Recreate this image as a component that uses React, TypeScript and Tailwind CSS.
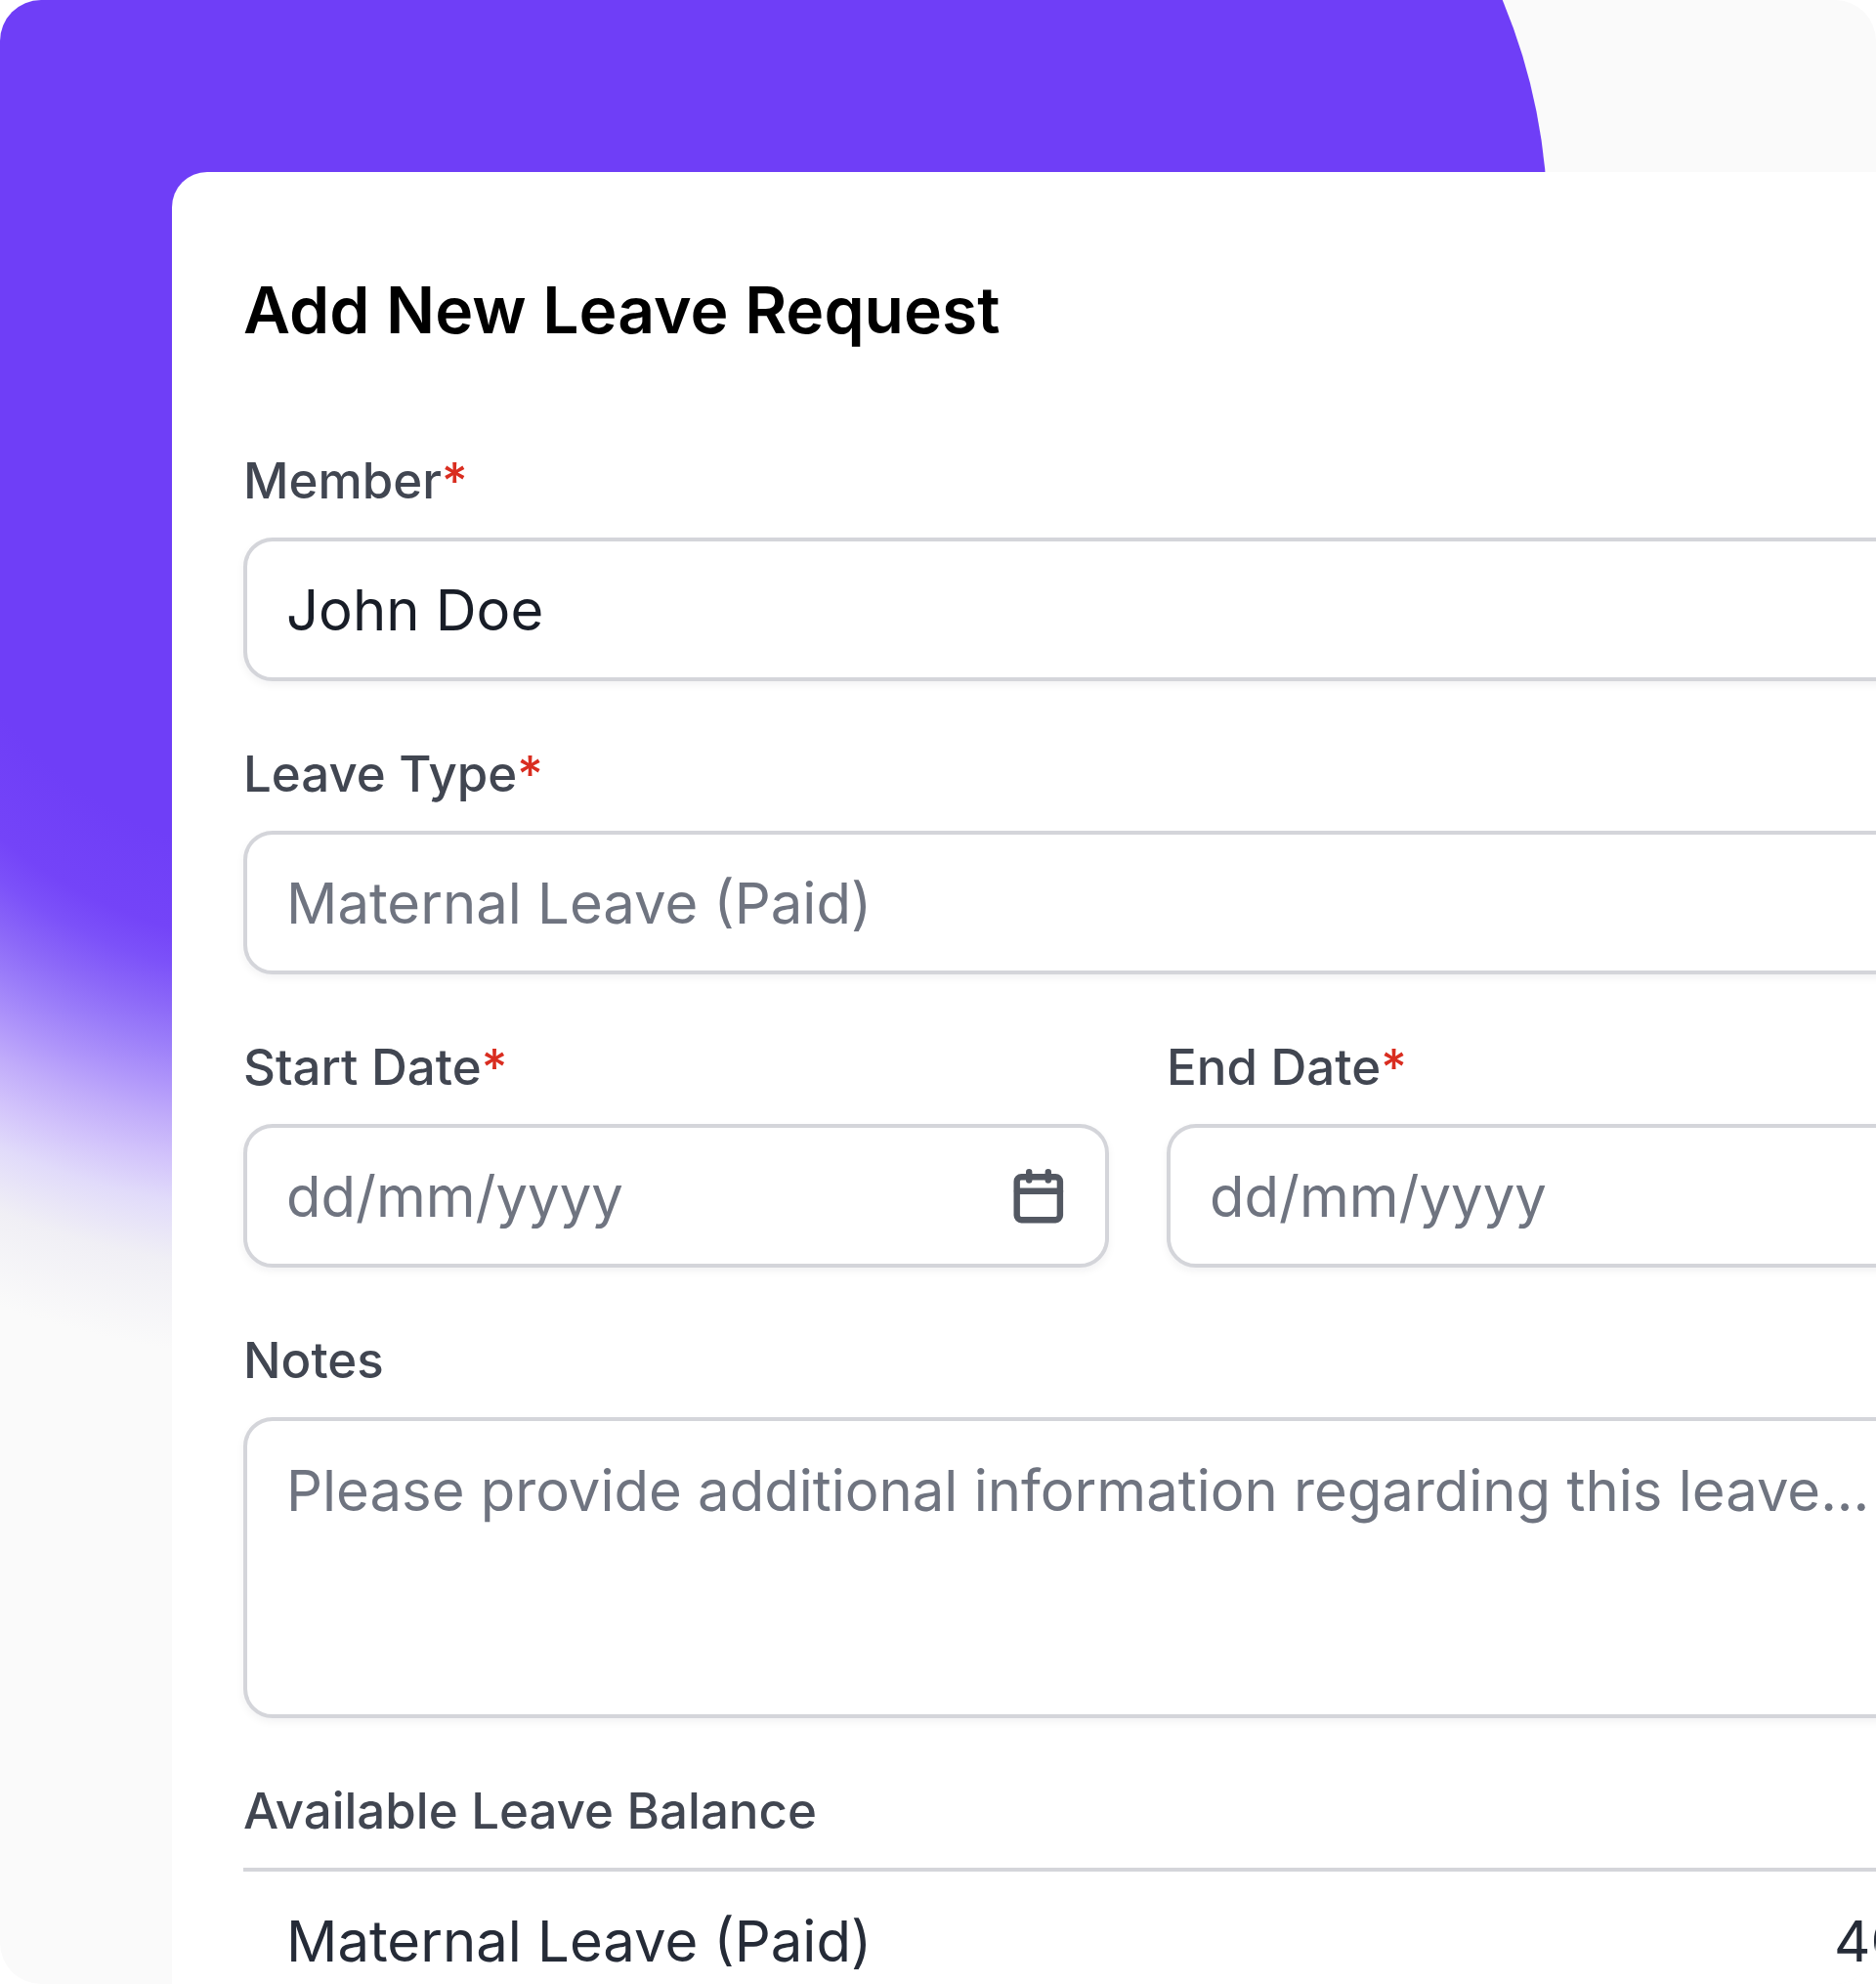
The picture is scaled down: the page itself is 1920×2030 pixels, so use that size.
import React from "react";

const fieldBox =
  "w-full rounded-[30px] border-4 border-[#d4d5da] bg-white shadow-[0_4px_8px_rgba(16,24,40,0.05)]";
const fieldText =
  "px-10 text-[58px] leading-[90px] outline-none placeholder:text-[#6f7480] placeholder:opacity-100";

function Label({ htmlFor, required, children }: { htmlFor: string; required?: boolean; children: React.ReactNode }) {
  return (
    <label htmlFor={htmlFor} className="block text-[51px] font-medium leading-[76px] text-[#414651]">
      {children}
      {required && <span className="text-[#d92d20]">*</span>}
    </label>
  );
}

function CalendarIcon() {
  return (
    <svg width="52" height="60" viewBox="0 0 52 60" fill="none" stroke="currentColor" strokeWidth="6.4" strokeLinecap="round" aria-hidden="true">
      <rect x="3.7" y="10.2" width="44.2" height="44" rx="4.6" />
      <path d="M4 24.8H48M16.2 5.2V13.6M35.8 5.2V13.6" />
    </svg>
  );
}

function DateField({ id, label }: { id: string; label: string }) {
  return (
    <div className="flex min-w-0 flex-1 flex-col gap-5">
      <Label htmlFor={id} required>{label}</Label>
      <div className={`${fieldBox} flex h-[147px] items-center pr-[42px]`}>
        <input id={id} type="text" placeholder="dd/mm/yyyy" className={`${fieldText} min-w-0 flex-1 bg-transparent`} />
        <button type="button" aria-label={`Pick ${label}`} className="text-[#535862]">
          <CalendarIcon />
        </button>
      </div>
    </div>
  );
}

function Backdrop() {
  return (
    <svg className="absolute left-0 top-0" width="1600" height="1500" viewBox="0 0 1600 1500" aria-hidden="true">
      <defs>
        <radialGradient id="fade" gradientUnits="userSpaceOnUse" cx="305" cy="490" r="900">
          <stop offset="0.43" stopColor="#6f3ef7" />
          <stop offset="0.53" stopColor="#7444f8" />
          <stop offset="0.569" stopColor="#7c51f9" />
          <stop offset="0.617" stopColor="#8c68f8" />
          <stop offset="0.655" stopColor="#9a7cf9" />
          <stop offset="0.7" stopColor="#ae94fa" />
          <stop offset="0.74" stopColor="#c0abfa" />
          <stop offset="0.786" stopColor="#d2c3fb" />
          <stop offset="0.833" stopColor="#e1dbfa" />
          <stop offset="0.9" stopColor="#f0eff5" />
          <stop offset="1" stopColor="#fafafa" />
        </radialGradient>
      </defs>
      <circle cx="984" cy="231" r="600" fill="#6f3ef7" />
      <rect width="984" height="490" fill="#6f3ef7" />
      <rect y="490" width="300" height="1000" fill="url(#fade)" />
    </svg>
  );
}

export default function App() {
  return (
    <div className="h-screen overflow-hidden bg-white font-['Inter',sans-serif]">
      <div className="relative h-full overflow-hidden rounded-[42px] bg-[#fafafa] pl-44 pt-44">
        <Backdrop />
        <main className="relative min-h-full rounded-tl-[36px] bg-white pl-[73px] pt-[91px]">
          <form className="-mr-40 flex flex-col gap-[57px]">
            <h1 className="mb-[30px] text-[66px] font-semibold leading-[100px] text-black">Add New Leave Request</h1>
            <div className="flex flex-col gap-5">
              <Label htmlFor="member" required>Member</Label>
              <input id="member" type="text" defaultValue="John Doe" className={`${fieldBox} ${fieldText} h-[147px] text-[#181d27]`} />
            </div>
            <div className="flex flex-col gap-5">
              <Label htmlFor="type" required>Leave Type</Label>
              <input id="type" type="text" placeholder="Maternal Leave (Paid)" className={`${fieldBox} ${fieldText} h-[147px]`} />
            </div>
            <div className="flex gap-[59px]">
              <DateField id="start" label="Start Date" />
              <DateField id="end" label="End Date" />
            </div>
            <div className="flex flex-col gap-5">
              <Label htmlFor="notes">Notes</Label>
              <textarea id="notes" placeholder="Please provide additional information regarding this leave..." className={`${fieldBox} ${fieldText} h-[308px] resize-none pt-[26px]`} />
            </div>
            <table className="w-full border-separate border-spacing-0 text-left">
              <caption className="pb-5 text-left text-[51px] font-medium leading-[76px] text-[#414651]">Available Leave Balance</caption>
              <tbody>
                <tr className="text-[58px] leading-[90px] text-[#252b37]">
                  <th scope="row" className="border-t-4 border-[#d4d5da] py-[26px] pl-11 font-normal">Maternal Leave (Paid)</th>
                  <td className="w-[203px] border-t-4 border-[#d4d5da] py-[26px]">40</td>
                </tr>
              </tbody>
            </table>
          </form>
        </main>
      </div>
    </div>
  );
}
